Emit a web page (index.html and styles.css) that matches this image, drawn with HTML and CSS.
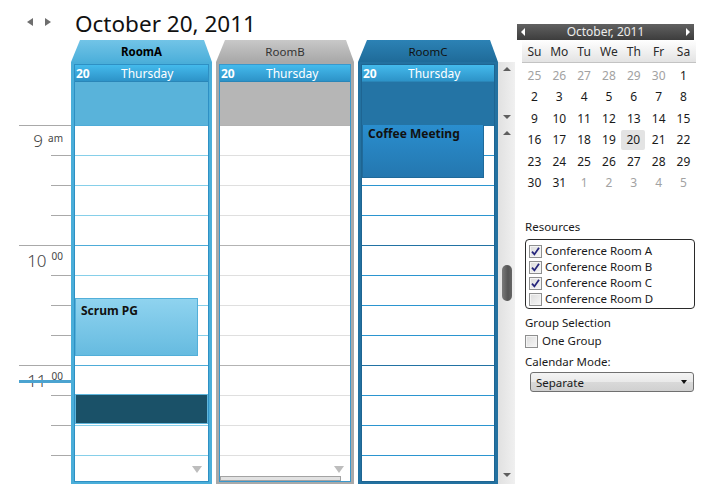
FILE: index.html
```html
<!DOCTYPE html>
<html>
<head>
<meta charset="utf-8">
<link rel="stylesheet" href="styles.css">
</head>
<body>
<div class="app">
  <div class="sched">
    <div class="topbar">
      <div class="nav"><span class="tri-l"></span><span class="tri-r"></span></div>
      <h1 class="title">October 20, 2011</h1>
    </div>
    <div class="grid">
      <div class="ruler">
        <div class="r-row hour"><span class="hd">9</span><span class="hs am">am</span></div>
        <div class="r-row"></div>
        <div class="r-row"></div>
        <div class="r-row"></div>
        <div class="r-row hour"><span class="hd">10</span><span class="hs">00</span></div>
        <div class="r-row"></div>
        <div class="r-row"></div>
        <div class="r-row"></div>
        <div class="r-row hour"><span class="hd">11</span><span class="hs">00</span></div>
        <div class="r-row"></div>
        <div class="r-row"></div>
        <div class="r-row"></div>
        <div class="now"></div>
      </div>

      <div class="col col-a">
        <div class="tab"><span>RoomA</span></div>
        <div class="body">
          <div class="inner">
            <div class="dayhead"><span class="num">20</span><span>Thursday</span></div>
            <div class="allday"></div>
            <div class="slots">
              <div class="event scrum"><b>Scrum PG</b></div>
              <div class="event dark"></div>
              <span class="more"></span>
            </div>
          </div>
        </div>
      </div>

      <div class="col col-b">
        <div class="tab"><span>RoomB</span></div>
        <div class="body">
          <div class="inner">
            <div class="dayhead"><span class="num">20</span><span>Thursday</span></div>
            <div class="allday"></div>
            <div class="slots">
              <span class="more"></span>
              <span class="hbar"></span>
            </div>
          </div>
        </div>
      </div>

      <div class="col col-c">
        <div class="tab"><span>RoomC</span></div>
        <div class="body">
          <div class="inner">
            <div class="dayhead"><span class="num">20</span><span>Thursday</span></div>
            <div class="allday"></div>
            <div class="slots">
              <div class="event coffee"><b>Coffee Meeting</b></div>
            </div>
          </div>
        </div>
      </div>

      <div class="vscroll">
        <span class="sa up first"></span>
        <span class="sa down d1"></span>
        <span class="sa up u2"></span>
        <span class="thumb"></span>
        <span class="sa down d2"></span>
      </div>
    </div>
  </div>

  <aside class="panel">
    <div class="cal">
      <div class="cal-head">
        <span class="ct-l"></span>
        <span class="cal-title">October, 2011</span>
        <span class="ct-r"></span>
      </div>
      <div class="cal-names">
        <span>Su</span><span>Mo</span><span>Tu</span><span>We</span><span>Th</span><span>Fr</span><span>Sa</span>
      </div>
      <div class="cal-days">
        <span class="o">25</span><span class="o">26</span><span class="o">27</span><span class="o">28</span><span class="o">29</span><span class="o">30</span><span>1</span>
        <span>2</span><span>3</span><span>4</span><span>5</span><span>6</span><span>7</span><span>8</span>
        <span>9</span><span>10</span><span>11</span><span>12</span><span>13</span><span>14</span><span>15</span>
        <span>16</span><span>17</span><span>18</span><span>19</span><span class="sel">20</span><span>21</span><span>22</span>
        <span>23</span><span>24</span><span>25</span><span>26</span><span>27</span><span>28</span><span>29</span>
        <span>30</span><span>31</span><span class="o">1</span><span class="o">2</span><span class="o">3</span><span class="o">4</span><span class="o">5</span>
      </div>
    </div>

    <div class="label res-label">Resources</div>
    <div class="res-box">
      <div class="cb-row"><span class="cb on"><svg width="9" height="9" viewBox="0 0 9 9"><path d="M1 4.6 L3.4 7.4 L8 0.8" stroke="#26267c" stroke-width="1.8" fill="none"/></svg></span>Conference Room A</div>
      <div class="cb-row"><span class="cb on"><svg width="9" height="9" viewBox="0 0 9 9"><path d="M1 4.6 L3.4 7.4 L8 0.8" stroke="#26267c" stroke-width="1.8" fill="none"/></svg></span>Conference Room B</div>
      <div class="cb-row"><span class="cb on"><svg width="9" height="9" viewBox="0 0 9 9"><path d="M1 4.6 L3.4 7.4 L8 0.8" stroke="#26267c" stroke-width="1.8" fill="none"/></svg></span>Conference Room C</div>
      <div class="cb-row"><span class="cb"></span>Conference Room D</div>
    </div>

    <div class="label grp-label">Group Selection</div>
    <div class="cb-row one"><span class="cb"></span>One Group</div>

    <div class="label mode-label">Calendar Mode:</div>
    <div class="select"><span>Separate</span><span class="sel-arrow"></span></div>
  </aside>
</div>
</body>
</html>
```

FILE: styles.css
```css
* { box-sizing: border-box; }

body {
  margin: 0;
  width: 715px;
  height: 500px;
  overflow: hidden;
  background: #fff;
  font-family: "Noto Sans", "Open Sans", sans-serif;
  font-size: 12px;
  color: #1a1a1a;
}

.app { display: flex; }

.sched { width: 517px; }

/* ---------- top bar ---------- */
.topbar { height: 40px; display: flex; }

.nav {
  width: 75px;
  display: flex;
  gap: 12px;
  padding: 18px 0 0 27px;
}

.tri-l, .tri-r {
  width: 0; height: 0;
  border-top: 4.5px solid transparent;
  border-bottom: 4.5px solid transparent;
}
.tri-l { border-right: 6px solid #6e6e6e; }
.tri-r { border-left: 6px solid #6e6e6e; }

.title {
  margin: 10px 0 0;
  font-size: 22.5px;
  font-weight: 400;
  line-height: 28px;
  color: #111;
  white-space: nowrap;
}

/* ---------- grid ---------- */
.grid { display: flex; height: 444px; }

.ruler {
  width: 71px;
  padding-top: 85px;
  position: relative;
  overflow: hidden;
}

.r-row {
  height: 30px;
  border-top: 1px solid #a9a9a9;
  margin-left: 51px;
}

.r-row.hour {
  margin-left: 19px;
  display: flex;
  justify-content: flex-end;
  align-items: flex-start;
  padding: 6px 8px 0 0;
  color: #454545;
}

.hd { font-size: 17px; line-height: 18px; font-weight: 300; }
.hs { font-size: 10px; line-height: 12px; margin: -2px 0 0 5px; }
.hs.am { margin-top: 0; }

.now {
  position: absolute;
  left: 19px;
  top: 340px;
  width: 52px;
  height: 3px;
  background: #4ba3d0;
}

/* ---------- columns ---------- */
.col {
  display: flex;
  flex-direction: column;
  margin-left: 4px;
}
.col-a { width: 141px; margin-left: 0; }
.col-b { width: 138px; }
.col-c { width: 140px; }

.tab {
  height: 22px;
  clip-path: polygon(9px 0, calc(100% - 8px) 0, 100% 100%, 0 100%);
  text-align: center;
  font-size: 11.5px;
  line-height: 24px;
}

.body {
  flex: 1;
  display: flex;
  padding: 2px 3px;
}

.inner {
  flex: 1;
  display: flex;
  flex-direction: column;
  background: #fff;
  border: 1px solid #2e90c4;
  overflow: hidden;
}

.dayhead {
  height: 17px;
  display: flex;
  line-height: 17px;
  color: #fff;
  background: linear-gradient(#44baec, #2d93c8);
  border-bottom: 1px solid #2a86b8;
}
.dayhead .num { width: 46px; padding-left: 1px; font-weight: 700; }

.allday { height: 43px; }

.slots {
  flex: 1;
  position: relative;
  overflow: hidden;
}

/* room A */
.col-a .tab { background: linear-gradient(#72c4e7, #4cafda); color: #000; font-weight: 700; }
.col-a .body { background: #4aaed9; }
.col-a .allday { background: #59b3da; }
.col-a .slots {
  background:
    repeating-linear-gradient(to bottom, #4eacd8 0 1px, transparent 1px 120px),
    repeating-linear-gradient(to bottom, #86cfe9 0 1px, transparent 1px 30px);
}

/* room B */
.col-b .tab { background: linear-gradient(#c8c8c8, #a8a8a8); color: #333; }
.col-b .body { background: #a9a9a9; }
.col-b .inner { border-color: #3898cd; }
.col-b .allday { background: #b6b6b6; }
.col-b .slots {
  background:
    repeating-linear-gradient(to bottom, #b3b3b3 0 1px, transparent 1px 120px),
    repeating-linear-gradient(to bottom, #dfdfdf 0 1px, transparent 1px 30px);
}

/* room C */
.col-c .tab { background: linear-gradient(#2c82b5, #1f6b99); color: #111; }
.col-c .body { background: #2371a0; }
.col-c .inner { border-color: #1e6592; }
.col-c .allday { background: #2474a5; }
.col-c .slots {
  background:
    repeating-linear-gradient(to bottom, #2272a3 0 1px, transparent 1px 120px),
    repeating-linear-gradient(to bottom, #2b95d0 0 1px, transparent 1px 30px);
}

/* events (placed on the time canvas) */
.event {
  position: absolute;
  left: 0;
  color: #111;
  font-size: 12px;
  line-height: 16px;
}

.scrum {
  top: 173px;
  width: 123px;
  height: 58px;
  padding: 4px 0 0 5px;
  background: linear-gradient(#8fd3ef, #66bbe0);
  border: 1px solid #52afd9;
}

.dark {
  top: 269px;
  width: 133px;
  height: 30px;
  background: #1a5168;
  border: 1px solid #5fb6dc;
}

.coffee {
  top: -10px;
  width: 122px;
  height: 63px;
  padding: 10px 0 0 5px;
  background: linear-gradient(#2b92d4, #2477af);
  border: 1px solid #1f6a9a;
}

.more {
  position: absolute;
  right: 6px;
  bottom: 8px;
  width: 0; height: 0;
  border-left: 5px solid transparent;
  border-right: 5px solid transparent;
  border-top: 7px solid #bdbdbd;
}

.hbar {
  position: absolute;
  left: 0;
  bottom: 0;
  width: 121px;
  height: 5px;
  background: #e2e2e2;
  border: 1px solid #a3a3a3;
}

/* ---------- scrollbar ---------- */
.vscroll {
  width: 17px;
  margin-top: 22px;
  display: flex;
  flex-direction: column;
  align-items: center;
  background: linear-gradient(to right, #e1e1e1, #f0f0f0);
}

.sa {
  width: 0; height: 0;
  border-left: 4px solid transparent;
  border-right: 4px solid transparent;
}
.sa.up { border-bottom: 4px solid #5e5e5e; }
.sa.down { border-top: 4px solid #5e5e5e; }
.sa.first { margin-top: 5px; }
.sa.d1 { margin-top: 44px; }
.sa.u2 { margin-top: 12px; }
.thumb {
  margin-top: 130px;
  width: 10px;
  height: 36px;
  border-radius: 5px;
  background: linear-gradient(to right, #7a7a7a, #555 60%, #666);
}
.sa.d2 { margin-top: 172px; }

/* ---------- right panel ---------- */
.panel { width: 198px; font-size: 11.5px; }

.cal { margin-top: 24px; font-size: 12px; }

.cal-head {
  width: 177px;
  height: 16px;
  display: flex;
  align-items: center;
  justify-content: space-between;
  padding: 0 4px;
  background: linear-gradient(#616161, #3d3d3d);
  color: #ececec;
  line-height: 16px;
}
.cal-title { font-size: 12px; }
.ct-l, .ct-r {
  width: 0; height: 0;
  border-top: 4px solid transparent;
  border-bottom: 4px solid transparent;
}
.ct-l { border-right: 4px solid #fff; }
.ct-r { border-left: 4px solid #fff; }

.cal-names, .cal-days {
  margin-left: 5px;
  width: 174px;
  display: grid;
  grid-template-columns: repeat(7, 24.85px);
  text-align: center;
}

.cal-names {
  height: 23px;
  line-height: 24px;
  color: #2a2a2a;
  background: linear-gradient(#fff, #e3e3e3);
  border-bottom: 1px solid #c3c3c3;
}

.cal-days {
  margin-top: 2px;
  grid-auto-rows: 21.4px;
  line-height: 21.4px;
  color: #1a1a1a;
}
.cal-days .o { color: #a2a2a2; }
.cal-days .sel {
  margin: 1px 1px 1px 0;
  line-height: 19.4px;
  background: #e3e3e3;
  border-radius: 2px;
}

.label {
  padding-left: 8px;
  line-height: 16px;
  color: #1a1a1a;
}
.res-label { margin-top: 26px; }

.res-box {
  margin: 4px 0 0 8px;
  width: 170px;
  height: 70px;
  padding: 3px 0 0 3px;
  border: 1px solid #2a2a2a;
  border-radius: 4px;
}

.cb-row {
  display: flex;
  align-items: center;
  height: 16px;
  line-height: 16px;
}

.cb {
  width: 13px;
  height: 13px;
  margin-right: 3px;
  display: flex;
  align-items: center;
  justify-content: center;
  border: 1px solid #8e8f8f;
  background: linear-gradient(135deg, #dcdcdc, #f7f7f7);
  box-shadow: inset 0 0 0 1px #f4f4f4;
}

.grp-label { margin-top: 6px; }
.cb-row.one { margin: 2px 0 0 8px; }
.cb-row.one .cb { margin-right: 4px; }

.mode-label { margin-top: 5px; }

.select {
  margin: 2px 0 0 13px;
  width: 164px;
  height: 20px;
  display: flex;
  align-items: center;
  justify-content: space-between;
  padding: 0 6px 0 5px;
  border: 1px solid #707070;
  border-radius: 3px;
  background: linear-gradient(#f4f4f4, #e9e9e9 50%, #d9d9d9 51%, #d0d0d0);
}
.sel-arrow {
  width: 0; height: 0;
  border-left: 3.5px solid transparent;
  border-right: 3.5px solid transparent;
  border-top: 4px solid #111;
}
```
